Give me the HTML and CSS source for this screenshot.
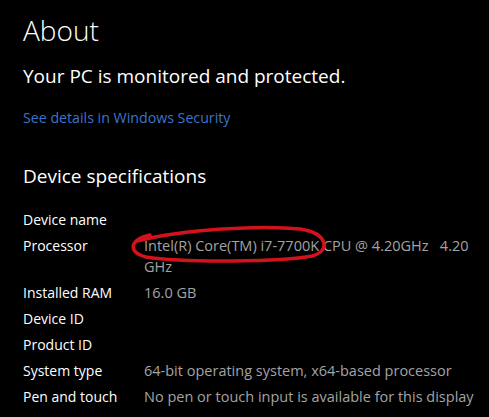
FILE: index.html
```html
<!DOCTYPE html>
<html lang="en">
<head>
    <meta charset="UTF-8">
    <meta name="viewport" content="width=device-width, initial-scale=1.0">
    <title>About</title>
    <link rel="stylesheet" href="styles.css">
</head>
<body>
    <h1>About</h1>
    <p class="status">Your PC is monitored and protected.</p>
    <a class="link" href="#">See details in Windows Security</a>

    <h2>Device specifications</h2>
    <div class="specs">
        <div class="label">Device name</div>
        <div class="value"></div>
        <div class="label">Processor</div>
        <div class="value">Intel(R) Core(TM) i7-7700K CPU @ 4.20GHz   4.20 GHz</div>
        <div class="label">Installed RAM</div>
        <div class="value">16.0 GB</div>
        <div class="label">Device ID</div>
        <div class="value"></div>
        <div class="label">Product ID</div>
        <div class="value"></div>
        <div class="label">System type</div>
        <div class="value">64-bit operating system, x64-based processor</div>
        <div class="label">Pen and touch</div>
        <div class="value">No pen or touch input is available for this display</div>
    </div>

    <!-- red marker scribble over the processor name -->
    <svg class="scribble" width="489" height="417" viewBox="0 0 489 417">
        <path d="M150 235 C131 239 126 252 146 257 C185 263 282 262 312 256 C331 251 328 233 300 229 C262 225 185 229 137 241"
              fill="none" stroke="#d3121b" stroke-width="3.5" stroke-linecap="round"/>
    </svg>
</body>
</html>
```

FILE: styles.css
```css
body {
    background-color: #000000;
    color: #ffffff;
    font-family: "Open Sans", "Noto Sans", sans-serif;
    margin: 0;
    padding: 12px 0 0 23px;
    position: relative;
}
h1 {
    font-size: 28px;
    font-weight: 300;
    line-height: 36px;
    margin: 0;
}
.status {
    font-size: 19px;
    line-height: 26px;
    margin: 15px 0 0;
}
.link {
    display: block;
    color: #3d74cc;
    text-decoration: none;
    font-size: 14.2px;
    line-height: 20px;
    margin-top: 19px;
}
h2 {
    font-size: 19px;
    font-weight: 400;
    line-height: 28px;
    margin: 34px 0 0;
}
.specs {
    display: grid;
    grid-template-columns: 121px 1fr;
    row-gap: 5px;
    margin-top: 19px;
    padding-right: 6px;
    font-size: 14px;
    line-height: 21px;
}
.value {
    color: #a3a3a3;
    font-size: 14.5px;
    white-space: pre-wrap;
}
.scribble {
    position: absolute;
    left: 0;
    top: 0;
    pointer-events: none;
}
```
